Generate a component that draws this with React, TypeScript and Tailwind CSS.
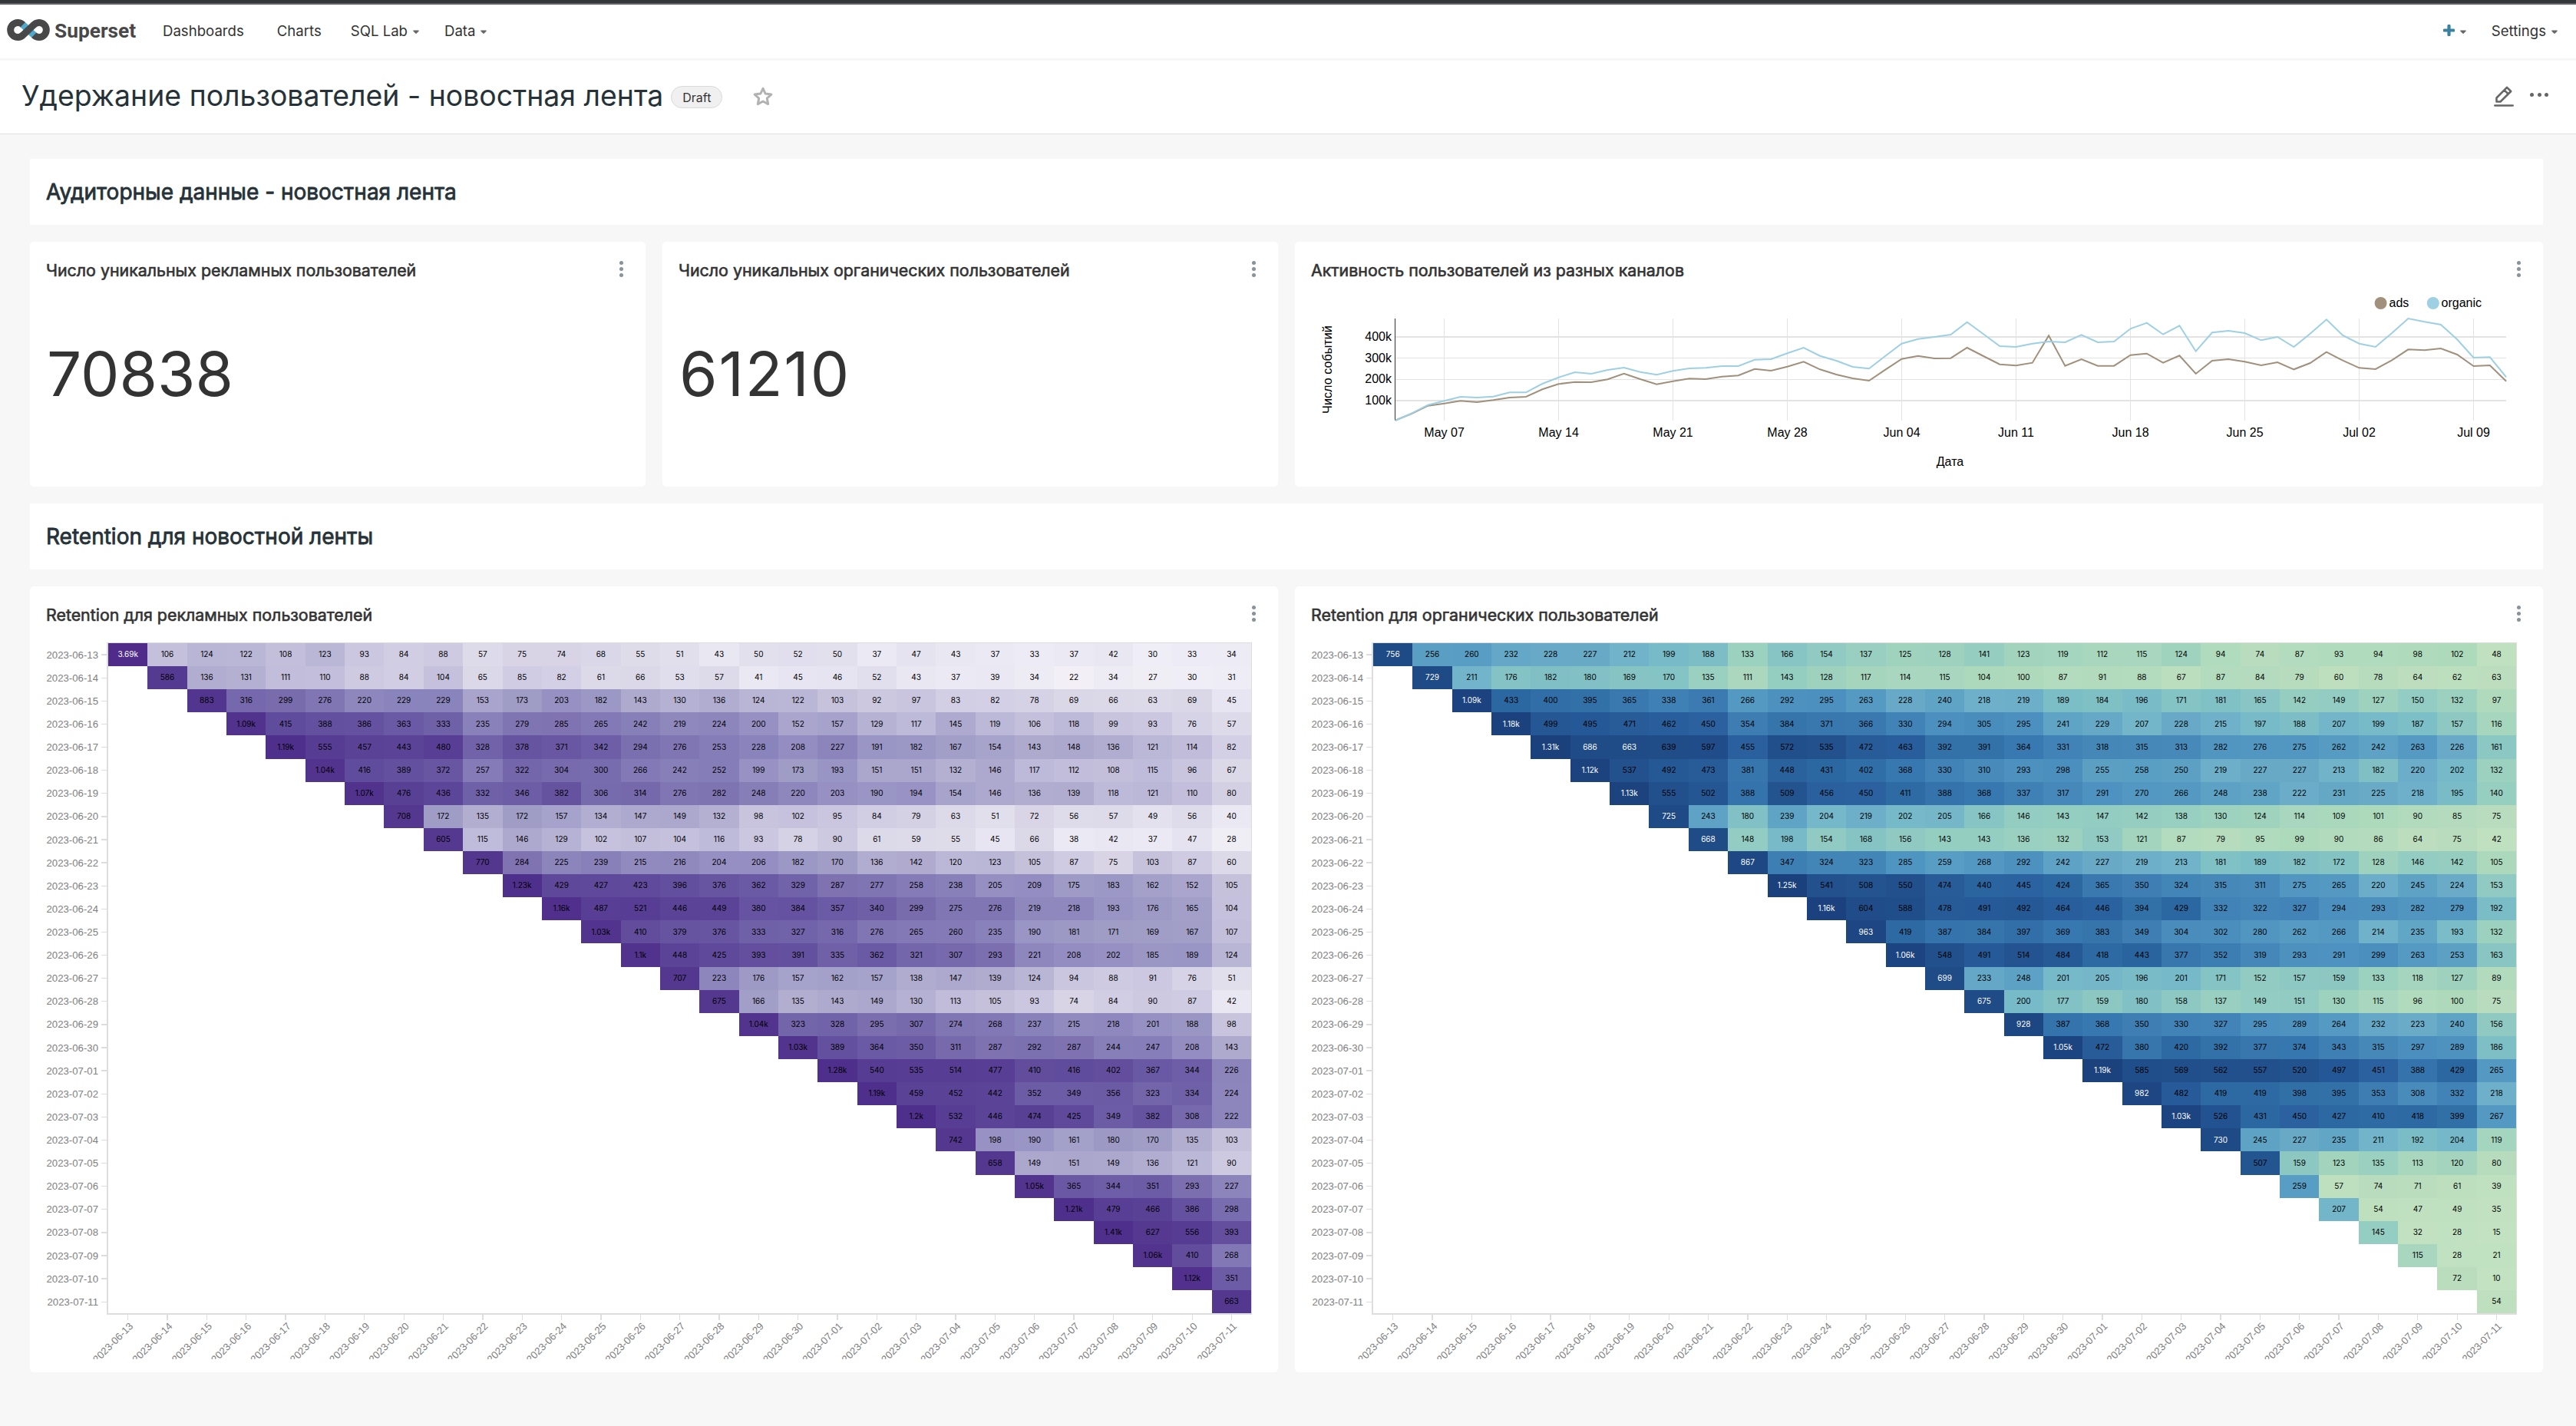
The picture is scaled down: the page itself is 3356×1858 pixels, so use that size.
import React from "react";

const DATES = [
  "2023-06-13", "2023-06-14", "2023-06-15", "2023-06-16", "2023-06-17", "2023-06-18", "2023-06-19", "2023-06-20",
  "2023-06-21", "2023-06-22", "2023-06-23", "2023-06-24", "2023-06-25", "2023-06-26", "2023-06-27", "2023-06-28",
  "2023-06-29", "2023-06-30", "2023-07-01", "2023-07-02", "2023-07-03", "2023-07-04", "2023-07-05", "2023-07-06",
  "2023-07-07", "2023-07-08", "2023-07-09", "2023-07-10", "2023-07-11",
];

// One line per cohort; the first value sits on the diagonal.
const ADS = `
3.69k 106 124 122 108 123 93 84 88 57 75 74 68 55 51 43 50 52 50 37 47 43 37 33 37 42 30 33 34
586 136 131 111 110 88 84 104 65 85 82 61 66 53 57 41 45 46 52 43 37 39 34 22 34 27 30 31
883 316 299 276 220 229 229 153 173 203 182 143 130 136 124 122 103 92 97 83 82 78 69 66 63 69 45
1.09k 415 388 386 363 333 235 279 285 265 242 219 224 200 152 157 129 117 145 119 106 118 99 93 76 57
1.19k 555 457 443 480 328 378 371 342 294 276 253 228 208 227 191 182 167 154 143 148 136 121 114 82
1.04k 416 389 372 257 322 304 300 266 242 252 199 173 193 151 151 132 146 117 112 108 115 96 67
1.07k 476 436 332 346 382 306 314 276 282 248 220 203 190 194 154 146 136 139 118 121 110 80
708 172 135 172 157 134 147 149 132 98 102 95 84 79 63 51 72 56 57 49 56 40
605 115 146 129 102 107 104 116 93 78 90 61 59 55 45 66 38 42 37 47 28
770 284 225 239 215 216 204 206 182 170 136 142 120 123 105 87 75 103 87 60
1.23k 429 427 423 396 376 362 329 287 277 258 238 205 209 175 183 162 152 105
1.16k 487 521 446 449 380 384 357 340 299 275 276 219 218 193 176 165 104
1.03k 410 379 376 333 327 316 276 265 260 235 190 181 171 169 167 107
1.1k 448 425 393 391 335 362 321 307 293 221 208 202 185 189 124
707 223 176 157 162 157 138 147 139 124 94 88 91 76 51
675 166 135 143 149 130 113 105 93 74 84 90 87 42
1.04k 323 328 295 307 274 268 237 215 218 201 188 98
1.03k 389 364 350 311 287 292 287 244 247 208 143
1.28k 540 535 514 477 410 416 402 367 344 226
1.19k 459 452 442 352 349 356 323 334 224
1.2k 532 446 474 425 349 382 308 222
742 198 190 161 180 170 135 103
658 149 151 149 136 121 90
1.05k 365 344 351 293 227
1.21k 479 466 386 298
1.41k 627 556 393
1.06k 410 268
1.12k 351
663`;

const ORGANIC = `
756 256 260 232 228 227 212 199 188 133 166 154 137 125 128 141 123 119 112 115 124 94 74 87 93 94 98 102 48
729 211 176 182 180 169 170 135 111 143 128 117 114 115 104 100 87 91 88 67 87 84 79 60 78 64 62 63
1.09k 433 400 395 365 338 361 266 292 295 263 228 240 218 219 189 184 196 171 181 165 142 149 127 150 132 97
1.18k 499 495 471 462 450 354 384 371 366 330 294 305 295 241 229 207 228 215 197 188 207 199 187 157 116
1.31k 686 663 639 597 455 572 535 472 463 392 391 364 331 318 315 313 282 276 275 262 242 263 226 161
1.12k 537 492 473 381 448 431 402 368 330 310 293 298 255 258 250 219 227 227 213 182 220 202 132
1.13k 555 502 388 509 456 450 411 388 368 337 317 291 270 266 248 238 222 231 225 218 195 140
725 243 180 239 204 219 202 205 166 146 143 147 142 138 130 124 114 109 101 90 85 75
668 148 198 154 168 156 143 143 136 132 153 121 87 79 95 99 90 86 64 75 42
867 347 324 323 285 259 268 292 242 227 219 213 181 189 182 172 128 146 142 105
1.25k 541 508 550 474 440 445 424 365 350 324 315 311 275 265 220 245 224 153
1.16k 604 588 478 491 492 464 446 394 429 332 322 327 294 293 282 279 192
963 419 387 384 397 369 383 349 304 302 280 262 266 214 235 193 132
1.06k 548 491 514 484 418 443 377 352 319 293 291 299 263 253 163
699 233 248 201 205 196 201 171 152 157 159 133 118 127 89
675 200 177 159 180 158 137 149 151 130 115 96 100 75
928 387 368 350 330 327 295 289 264 232 223 240 156
1.05k 472 380 420 392 377 374 343 315 297 289 186
1.19k 585 569 562 557 520 497 451 388 429 265
982 482 419 419 398 395 353 308 332 218
1.03k 526 431 450 427 410 418 399 267
730 245 227 235 211 192 204 119
507 159 123 135 113 120 80
259 57 74 71 61 39
207 54 47 49 35
145 32 28 15
115 28 21
72 10
54`;

type Stop = [number, string];

const PURPLES: Stop[] = [
  [22, "#f2eff6"], [30, "#efedf5"], [37, "#ebe9f4"], [43, "#e9e7f2"], [50, "#e3e0ee"], [57, "#dddbe9"], [66, "#dbd8e8"],
  [75, "#d8d4e6"], [84, "#d1cde3"], [93, "#cbc7e0"], [106, "#c4c0db"], [115, "#bfbbda"], [124, "#b8b5d5"], [136, "#b1add0"],
  [147, "#ada8cd"], [157, "#a5a2cb"], [172, "#9f9cc6"], [190, "#9995c4"], [203, "#9690c3"], [220, "#8e87bd"], [229, "#8a84bc"],
  [242, "#8780b8"], [265, "#8379b6"], [284, "#7f73b2"], [300, "#776cad"], [316, "#7568ac"], [333, "#6f61a8"], [350, "#6c5ca6"],
  [363, "#6a59a4"], [376, "#6855a2"], [389, "#63509e"], [415, "#604c9c"], [443, "#5b4498"], [480, "#583f95"], [555, "#563c93"],
  [605, "#553990"], [883, "#52358e"], [1040, "#52338d"], [1200, "#4f2f8c"], [3690, "#4f2c8a"],
];

const BLUES: Stop[] = [
  [10, "#c2e2c1"], [48, "#c0e1c0"], [60, "#bddfbe"], [75, "#b8dcbd"], [90, "#b2dbbd"], [102, "#addabb"], [115, "#a8d6be"],
  [124, "#a0d3bd"], [132, "#9cd1bf"], [141, "#95cec0"], [149, "#92ccc2"], [157, "#8ec8c2"], [166, "#87c5c4"], [180, "#81c1c5"],
  [189, "#7cbec6"], [199, "#77bac8"], [207, "#74b6c9"], [219, "#6dafc9"], [228, "#67a9c6"], [240, "#5fa4c5"], [255, "#5ba0c3"],
  [265, "#5499c2"], [282, "#5096c1"], [295, "#4c90bf"], [310, "#488bba"], [324, "#4285b7"], [338, "#4081b5"], [354, "#3d7db2"],
  [368, "#3878b0"], [381, "#3676ad"], [395, "#3270a8"], [411, "#2e6ba5"], [431, "#2b68a1"], [450, "#2a619e"], [472, "#275c99"],
  [495, "#245896"], [509, "#235490"], [535, "#22518e"], [572, "#214f8b"], [597, "#204d89"], [686, "#1f4b86"], [756, "#1e4a85"],
  [928, "#1d4783"], [1090, "#1c437f"], [1250, "#1a417c"],
];

const toNumber = (s: string) => (s.endsWith("k") ? parseFloat(s) * 1000 : parseFloat(s));

const channels = (hex: string) => [1, 3, 5].map((i) => parseInt(hex.slice(i, i + 2), 16));

function colorAt(stops: Stop[], value: number) {
  if (value <= stops[0][0]) return stops[0][1];
  for (let i = 1; i < stops.length; i++) {
    const [v1, c1] = stops[i];
    if (value <= v1) {
      const [v0, c0] = stops[i - 1];
      const t = (value - v0) / (v1 - v0);
      const a = channels(c0);
      const b = channels(c1);
      return `rgb(${a.map((x, k) => Math.round(x + (b[k] - x) * t)).join(",")})`;
    }
  }
  return stops[stops.length - 1][1];
}

function Heatmap({ data, stops, lightFrom }: { data: string; stops: Stop[]; lightFrom: number }) {
  const rows = data.trim().split("\n").map((line) => line.split(" "));
  const x0 = 90;
  const y0 = 18;
  const cw = 51.35;
  const ch = 30.11;
  const right = x0 + cw * 29;
  const bottom = y0 + ch * 29;
  return (
    <svg width="1592" height="951" className="-ml-[10px] block shrink-0 font-['Inter',sans-serif]">
      <g shapeRendering="crispEdges">
        {rows.map((row, r) =>
          row.map((v, k) => (
            <rect
              key={`${r}-${k}`}
              x={x0 + (r + k) * cw}
              y={y0 + r * ch}
              width={cw + 0.02}
              height={ch + 0.02}
              fill={colorAt(stops, toNumber(v))}
            />
          )),
        )}
      </g>
      <g fontSize="10" textAnchor="middle">
        {rows.map((row, r) =>
          row.map((v, k) => (
            <text
              key={`${r}-${k}`}
              x={x0 + (r + k + 0.5) * cw}
              y={y0 + (r + 0.5) * ch + 3.2}
              fill={toNumber(v) >= lightFrom ? "#ffffff" : "#000000"}
            >
              {v}
            </text>
          )),
        )}
      </g>
      <g fill="#dddddd" shapeRendering="crispEdges">
        <rect x={x0 - 2} y={y0 - 1.5} width={right - x0 + 3} height="1.5" />
        <rect x={x0 - 2} y={y0 - 1.5} width="2" height={bottom - y0 + 3} />
        <rect x={right} y={y0 - 1.5} width="1" height={bottom - y0 + 3} />
        <rect x={x0 - 2} y={bottom} width={right - x0 + 3} height="2" />
        {DATES.map((d, i) => (
          <g key={d}>
            <rect x={x0 - 9} y={y0 + (i + 0.5) * ch - 0.6} width="8" height="1.3" />
            <rect x={x0 + (i + 0.5) * cw - 0.6} y={bottom + 1} width="1.3" height="8" />
          </g>
        ))}
      </g>
      <g fontSize="13.2" fill="#808080" textAnchor="end" className="font-['Liberation_Sans',Arial,sans-serif]">
        {DATES.map((d, i) => (
          <text key={d} x="77" y={y0 + (i + 0.5) * ch + 4.6}>
            {d}
          </text>
        ))}
        {DATES.map((d, i) => (
          <text key={d} transform={`translate(${x0 + (i + 0.5) * cw + 7.5} ${bottom + 17.5}) rotate(-45)`}>
            {d}
          </text>
        ))}
      </g>
    </svg>
  );
}

// Heights of the curve points in thirds of a pixel, one per day from May 4.
const ORGANIC_LINE = [
  714, 686, 653, 637, 621, 624, 620, 604, 604, 570, 545, 525, 531, 516, 507, 524, 535, 520, 510, 508, 501, 501, 476, 474,
  451, 429, 461, 480, 504, 511, 461, 413, 395, 387, 378, 329, 376, 423, 426, 413, 405, 408, 379, 408, 405, 355, 332, 377,
  343, 443, 370, 363, 372, 400, 387, 426, 374, 319, 381, 413, 426, 372, 315, 328, 339, 397, 468, 466, 544,
];
const ADS_LINE = [
  713, 687, 656, 647, 637, 642, 634, 624, 621, 592, 571, 563, 564, 553, 530, 552, 572, 560, 550, 552, 542, 538, 512, 519,
  503, 484, 514, 534, 549, 558, 515, 473, 461, 471, 470, 429, 462, 494, 499, 488, 382, 500, 474, 500, 500, 458, 452, 488,
  460, 531, 480, 474, 484, 498, 486, 514, 489, 446, 479, 508, 513, 478, 436, 439, 432, 456, 501, 498, 560,
];
const WEEKS = ["May 07", "May 14", "May 21", "May 28", "Jun 04", "Jun 11", "Jun 18", "Jun 25", "Jul 02", "Jul 09"];

function ActivityChart() {
  const left = 108.7;
  const day = 21.285;
  const right = left + day * 68;
  const line = (ys: number[]) => ys.map((y, i) => `${(left + i * day).toFixed(1)},${(y / 3 - 61).toFixed(1)}`).join(" ");
  return (
    <svg width="1582" height="250" className="block font-['Liberation_Sans',Arial,sans-serif]" fontSize="16" fill="#000">
      <g fill="#e3e3e3" shapeRendering="crispEdges">
        {WEEKS.map((w, i) => (
          <rect key={w} x={left + day * (3 + 7 * i) - 0.5} y="44" width="1" height="133" />
        ))}
        {[67, 95, 123, 150].map((y, i) => (
          <rect key={y} x={left} y={y} width={right - left} height={i % 3 === 0 ? 2 : 1} />
        ))}
      </g>
      <rect x="108" y="44" width="1" height="133" fill="#333" shapeRendering="crispEdges" />
      <polyline points={line(ADS_LINE)} fill="none" stroke="#a1907b" strokeWidth="2" />
      <polyline points={line(ORGANIC_LINE)} fill="none" stroke="#9dd0e2" strokeWidth="2" />
      <g textAnchor="end">
        {["400k", "300k", "200k", "100k"].map((t, i) => (
          <text key={t} x="104" y={72.8 + i * 27.7}>
            {t}
          </text>
        ))}
      </g>
      <g textAnchor="middle">
        {WEEKS.map((w, i) => (
          <text key={w} x={left + day * (3 + 7 * i)} y="198">
            {w}
          </text>
        ))}
        <text x="831.5" y="236">
          Дата
        </text>
        <text fontSize="16.2" transform="translate(26 110.5) rotate(-90)">
          Число событий
        </text>
      </g>
      <circle cx="1392.6" cy="24" r="8" fill="#a1907b" />
      <text x="1403.5" y="29">
        ads
      </text>
      <circle cx="1460.8" cy="24" r="8" fill="#9dd0e2" />
      <text x="1471.5" y="29">
        organic
      </text>
    </svg>
  );
}

function Caret() {
  return (
    <svg width="8" height="6" viewBox="0 0 8 6" className="mt-[2px] block">
      <path d="M0.9 0.6H7.1C7.7 0.6 7.9 1.2 7.5 1.7L4.7 4.6C4.3 5 3.7 5 3.3 4.6L0.5 1.7C0.1 1.2 0.3 0.6 0.9 0.6Z" fill="#666" />
    </svg>
  );
}

function Logo() {
  return (
    <svg width="60" height="32" viewBox="7 23 60 32" className="mb-[4px] block" fill="none" strokeWidth="9">
      <path d="M29.5 32L44.5 46" stroke="#4fa9cb" />
      <path d="M29.8 32.2A9.5 9.5 0 1 0 30.2 45.4L43.8 32.6A9.5 9.5 0 1 1 44.2 45.8" stroke="#484848" />
    </svg>
  );
}

function Kebab() {
  return (
    <span className="mt-[25px] flex w-[5px] flex-col gap-[3px]">
      <i className="size-[5px] rounded-full bg-[#879399]" />
      <i className="size-[5px] rounded-full bg-[#879399]" />
      <i className="size-[5px] rounded-full bg-[#879399]" />
    </span>
  );
}

function Card({ title, children }: { title: string; children: React.ReactNode }) {
  return (
    <section className="flex flex-col overflow-hidden rounded-[5px] bg-white px-[22px]">
      <header className="flex h-[56px] shrink-0 items-start justify-between pr-[7px]">
        <h3 className="mt-[21px] -ml-[1px] text-[21.37px] leading-[32px] whitespace-nowrap text-[#333] [-webkit-text-stroke:0.6px_#333]">
          {title}
        </h3>
        <Kebab />
      </header>
      {children}
    </section>
  );
}

function BigNumber({ value, className }: { value: string; className?: string }) {
  return <div className={`mt-[68px] text-[80px] leading-[96px] text-[#333] ${className ?? ""}`}>{value}</div>;
}

function SectionHeader({ children }: { children: string }) {
  return (
    <div className="col-span-4 flex h-[86px] items-center bg-white px-[21px] text-[28px] text-[#263238] [-webkit-text-stroke:0.8px_#263238]">
      {children}
    </div>
  );
}

export default function App() {
  return (
    <div className="min-h-[1858px] w-[3356px] bg-[#f7f7f7] font-['Inter',sans-serif] text-[#333]">
      <div className="h-[4px] bg-[#35363a]" />
      <div className="h-[2px] bg-[#616165]" />
      <nav className="flex h-[70px] items-center bg-white pr-[24px] pl-[7px] text-[18.6px]">
        <Logo />
        <span className="ml-[4px] w-[106px] font-['Roboto',sans-serif] text-[26.3px] font-bold text-[#484848]">Superset</span>
        <span className="ml-[35px]">Dashboards</span>
        <span className="ml-[43px]">Charts</span>
        <span className="mr-[7px] ml-[38px]">SQL Lab</span>
        <Caret />
        <span className="mr-[7px] ml-[33px]">Data</span>
        <Caret />
        <span className="ml-auto flex items-center">
          <svg width="15" height="15" viewBox="0 0 15 15" className="mr-[7px] mb-[3px] block">
            <path d="M7.5 1.7V13.3M1.7 7.5H13.3" stroke="#3b82a0" strokeWidth="4.2" strokeLinecap="round" />
          </svg>
          <Caret />
          <span className="mr-[7px] ml-[33px]">Settings</span>
          <Caret />
        </span>
      </nav>
      <div className="mt-[3px] flex h-[96px] items-center border-b border-[#e0e0e0] bg-white pr-[36px] pl-[28px]">
        <h1 className="mb-[2px] text-[37.4px] whitespace-nowrap text-[#263238]">Удержание пользователей - новостная лента</h1>
        <span className="ml-[10px] flex h-[29px] w-[67px] items-center justify-center rounded-full border border-[#d9d9d9] bg-[#f0f0f0] text-[16px]">
          Draft
        </span>
        <svg width="28" height="28" viewBox="0 0 28 28" className="mb-[1px] ml-[39px] block" fill="none" stroke="#b2b2b2" strokeWidth="3" strokeLinejoin="round">
          <path d="M14 3.4L17.2 10.1L24.8 11.1L19.3 16.2L20.7 23.6L14 20L7.3 23.6L8.7 16.2L3.2 11.1L10.8 10.1Z" />
        </svg>
        <svg width="28" height="30" viewBox="0 0 28 30" className="mb-[4px] ml-auto block" fill="none" stroke="#666" strokeWidth="2.6" strokeLinejoin="round" strokeLinecap="round">
          <path d="M4.5 22.5V17.5L18 3.8L23.2 9L9.5 22.5ZM14.6 7.4L19.6 12.4" />
          <path d="M2.3 27.5H25.7" />
        </svg>
        <span className="mb-[7px] ml-[20px] flex gap-[4.5px]">
          <i className="size-[5px] rounded-full bg-[#666]" />
          <i className="size-[5px] rounded-full bg-[#666]" />
          <i className="size-[5px] rounded-full bg-[#666]" />
        </span>
      </div>
      <main className="grid grid-cols-4 grid-rows-[86px_319px_86px_1024px] gap-[22px] pt-[32px] pr-[43px] pl-[39px]">
        <SectionHeader>Аудиторные данные - новостная лента</SectionHeader>
        <Card title="Число уникальных рекламных пользователей">
          <BigNumber value="70838" />
        </Card>
        <Card title="Число уникальных органических пользователей">
          <BigNumber value="61210" className="tracking-[1.8px]" />
        </Card>
        <div className="col-span-2 grid">
          <Card title="Активность пользователей из разных каналов">
            <ActivityChart />
          </Card>
        </div>
        <SectionHeader>Retention для новостной ленты</SectionHeader>
        <div className="col-span-2 grid">
          <Card title="Retention для рекламных пользователей">
            <Heatmap data={ADS} stops={PURPLES} lightFrom={2000} />
          </Card>
        </div>
        <div className="col-span-2 grid">
          <Card title="Retention для органических пользователей">
            <Heatmap data={ORGANIC} stops={BLUES} lightFrom={655} />
          </Card>
        </div>
      </main>
    </div>
  );
}
